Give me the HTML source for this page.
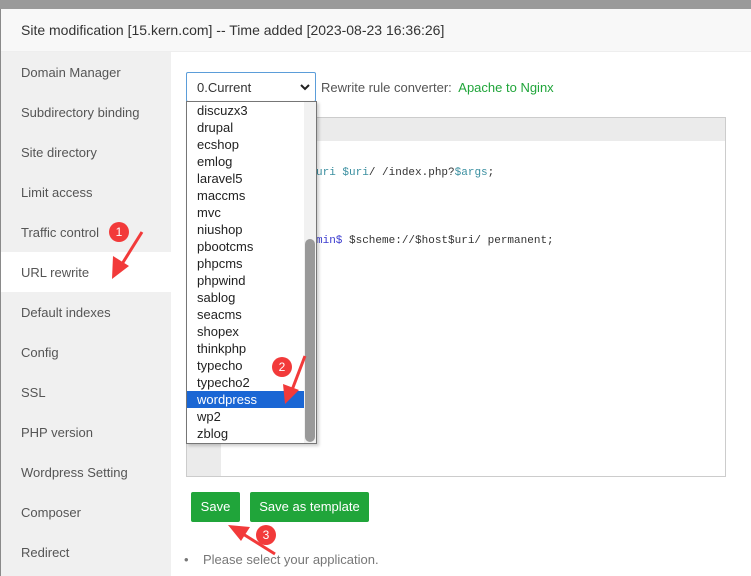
<!DOCTYPE html>
<html><head><style>
*{margin:0;padding:0;box-sizing:border-box}
body{width:751px;height:576px;overflow:hidden;background:#fff;font-family:"Liberation Sans","Noto Sans CJK SC",sans-serif;position:relative}
.top{position:absolute;left:0;top:0;width:751px;height:9px;background:#9a9a9a}
.ledge{position:absolute;left:0;top:9px;width:1px;height:567px;background:#8a8a8a}
.title{position:absolute;left:1px;top:9px;width:750px;height:43px;background:#f8f8f8;border-bottom:1px solid #eee;font-size:14px;color:#333;line-height:43px;padding-left:20px}
.side{position:absolute;left:1px;top:52px;width:170px;height:524px;background:#f0f0f0}
.side div{height:40px;line-height:42px;padding-left:20px;font-size:13px;color:#555}
.side div.act{background:#fff}
.sel{position:absolute;left:186px;top:72px;width:130px;height:30px;border:1px solid #5b9dd9;border-radius:2px;font-size:13px;color:#333;line-height:29px;padding-left:10px}
.lbl{position:absolute;left:321px;top:80px;font-size:13px;color:#555}
.lbl span{color:#20a53a}
.code{position:absolute;left:186px;top:117px;width:540px;height:360px;border:1px solid #ccc;background:#fff}
.code .hd{position:absolute;left:0;top:0;width:100%;height:23px;background:#ebebeb}
.code .gut{position:absolute;left:0;top:23px;width:34px;height:335px;background:#ebebeb}
.mono{position:absolute;font-family:"Liberation Mono",monospace;font-size:11px;color:#333;white-space:pre}
.t{color:#3a8fa0}.p{color:#3a3acf}
.list{position:absolute;left:186px;top:101px;width:131px;height:343px;background:#fff;border:1px solid #767676;box-shadow:2px 2px 3px rgba(0,0,0,.2);overflow:hidden}
.list .it{height:17px;line-height:18px;font-size:13px;color:#222;padding-left:10px}
.list .it.hl{background:#1a66d4;color:#fff}
.sb{position:absolute;right:0;top:0;width:12px;height:341px;background:#f1f1f1}
.th{position:absolute;right:1px;top:137px;width:10px;height:203px;background:#999;border-radius:5px}
.btn{position:absolute;top:492px;height:30px;background:#20a53a;color:#fff;font-size:13px;line-height:30px;text-align:center;border-radius:2px}
.note{position:absolute;left:184px;top:552px;font-size:13px;color:#777}
.badge{position:absolute;width:20px;height:20px;border-radius:50%;background:#f23a3a;color:#fff;font-size:12px;text-align:center;line-height:20px}
</style></head><body>
<div class="top"></div><div class="ledge"></div>
<div class="title">Site modification [15.kern.com] -- Time added [2023-08-23 16:36:26]</div>
<div class="side">
<div>Domain Manager</div><div>Subdirectory binding</div><div>Site directory</div><div>Limit access</div><div>Traffic control</div><div class="act">URL rewrite</div><div>Default indexes</div><div>Config</div><div>SSL</div><div>PHP version</div><div>Wordpress Setting</div><div>Composer</div><div>Redirect</div>
</div>
<div class="sel">0.Current<svg style="position:absolute;right:5px;top:10px" width="10" height="8" viewBox="0 0 10 8"><path d="M1 2 L5 6 L9 2" stroke="#222" stroke-width="2" fill="none"/></svg></div>
<div class="lbl">Rewrite rule converter:&nbsp; <span>Apache to Nginx</span></div>
<div class="code"><div class="hd"></div><div class="gut"></div></div>
<div class="mono" style="left:316px;top:167px"><span class="t">uri $uri</span>/ /index.php?<span class="t">$args</span>;</div>
<div class="mono" style="left:316px;top:235px"><span class="p">min$</span> $scheme://$host$uri/ permanent;</div>
<div class="list">
<div class="it">discuzx3</div><div class="it">drupal</div><div class="it">ecshop</div><div class="it">emlog</div><div class="it">laravel5</div><div class="it">maccms</div><div class="it">mvc</div><div class="it">niushop</div><div class="it">pbootcms</div><div class="it">phpcms</div><div class="it">phpwind</div><div class="it">sablog</div><div class="it">seacms</div><div class="it">shopex</div><div class="it">thinkphp</div><div class="it">typecho</div><div class="it">typecho2</div><div class="it hl">wordpress</div><div class="it">wp2</div><div class="it">zblog</div>
<div class="sb"></div><div class="th"></div>
</div>
<div class="btn" style="left:191px;width:49px">Save</div>
<div class="btn" style="left:250px;width:119px">Save as template</div>
<div class="note">•&nbsp;&nbsp;&nbsp; Please select your application.</div>
<div class="badge" style="left:109px;top:222px">1</div>
<div class="badge" style="left:272px;top:357px">2</div>
<div class="badge" style="left:256px;top:525px">3</div>
<svg style="position:absolute;left:0;top:0" width="751" height="576">
<path d="M142 232 L122 264" stroke="#f23a3a" stroke-width="3"/><path d="M112 279 L113 256 L129 266 Z" fill="#f23a3a"/>
<path d="M305 356 L292 390" stroke="#f23a3a" stroke-width="3"/><path d="M285 404 L283 384 L299 390 Z" fill="#f23a3a"/>
<path d="M275 554 L243 534" stroke="#f23a3a" stroke-width="3"/><path d="M228 525 L250 527 L241 541 Z" fill="#f23a3a"/>
</svg>
</body></html>
